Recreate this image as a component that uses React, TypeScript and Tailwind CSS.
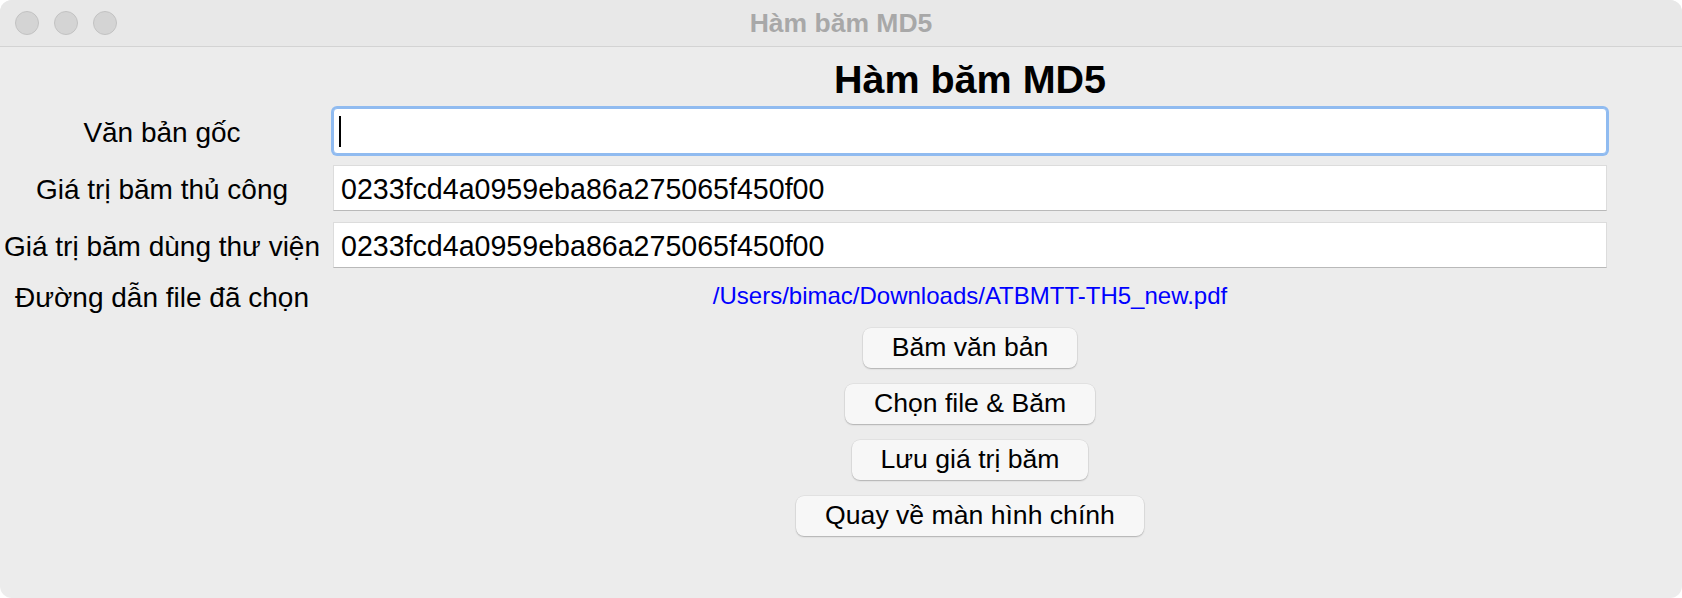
import React from "react";

function Entry({ value, focused }: { value?: string; focused?: boolean }) {
  if (focused) {
    return (
      <div className="h-[46px] bg-white rounded-[4px] border border-[#90bbf0] shadow-[0_0_0_2px_#90bbf0] flex items-center pl-[5px]">
        <div className="w-[2px] h-[31px] bg-black" />
      </div>
    );
  }
  return (
    <div className="h-[46px] bg-white border border-[#dcdcdc] border-b-[#b9b9b9] flex items-center pl-[7px] pt-[2px] text-[28.6px] text-black whitespace-nowrap">
      {value}
    </div>
  );
}

function Label({ children }: { children: React.ReactNode }) {
  return (
    <div className="flex items-center justify-center pt-[3px] text-[28px] text-black whitespace-nowrap">
      {children}
    </div>
  );
}

function Btn({ children }: { children: React.ReactNode }) {
  return (
    <div className="h-[40px] px-[29px] flex items-center justify-center rounded-[8px] bg-[#f7f7f7] text-[26.6px] text-black whitespace-nowrap shadow-[0_1px_1.5px_rgba(0,0,0,0.22),0_0_0_0.5px_rgba(0,0,0,0.08)]">
      {children}
    </div>
  );
}

export default function App() {
  const hash = "0233fcd4a0959eba86a275065f450f00";
  return (
    <div className="w-[1682px] h-[598px] bg-white font-['Liberation_Sans',Arial,sans-serif]">
      <div className="relative w-full h-full rounded-[12px] overflow-hidden bg-[#ececec] flex flex-col">
        <div className="h-[47px] shrink-0 bg-[#e8e8e8] border-b border-[#d3d3d3] grid grid-cols-[1fr_auto_1fr] items-center">
          <div className="flex gap-[15px] pl-[15px]">
            <div className="w-[24px] h-[24px] rounded-full bg-[#d4d4d4] border border-[#c2c2c2]" />
            <div className="w-[24px] h-[24px] rounded-full bg-[#d4d4d4] border border-[#c2c2c2]" />
            <div className="w-[24px] h-[24px] rounded-full bg-[#d4d4d4] border border-[#c2c2c2]" />
          </div>
          <div className="text-[26.5px] font-bold text-[#a8a8a8] leading-none">Hàm băm MD5</div>
          <div />
        </div>

        <div className="grid grid-cols-[324px_1274px] gap-x-[9px] mt-[9px]">
          <div />
          <div className="text-center text-[39.5px] font-bold leading-[46px] text-black">Hàm băm MD5</div>
        </div>

        <div className="grid grid-cols-[324px_1274px] gap-x-[9px] gap-y-[11px] mt-[6px]">
          <Label>Văn bản gốc</Label>
          <Entry focused />
          <Label>Giá trị băm thủ công</Label>
          <Entry value={hash} />
          <Label>Giá trị băm dùng thư viện</Label>
          <Entry value={hash} />
          <div className="h-[34px] flex items-center justify-center pt-[3px] text-[28px] text-black whitespace-nowrap">
            Đường dẫn file đã chọn
          </div>
          <div className="h-[34px] flex items-center justify-center text-[24px] text-[#0000ff] whitespace-nowrap">
            /Users/bimac/Downloads/ATBMTT-TH5_new.pdf
          </div>
        </div>

        <div className="grid grid-cols-[324px_1274px] gap-x-[9px] mt-[15px]">
          <div />
          <div className="flex flex-col items-center gap-[16px]">
            <Btn>Băm văn bản</Btn>
            <Btn>Chọn file &amp; Băm</Btn>
            <Btn>Lưu giá trị băm</Btn>
            <Btn>Quay về màn hình chính</Btn>
          </div>
        </div>
      </div>
    </div>
  );
}
